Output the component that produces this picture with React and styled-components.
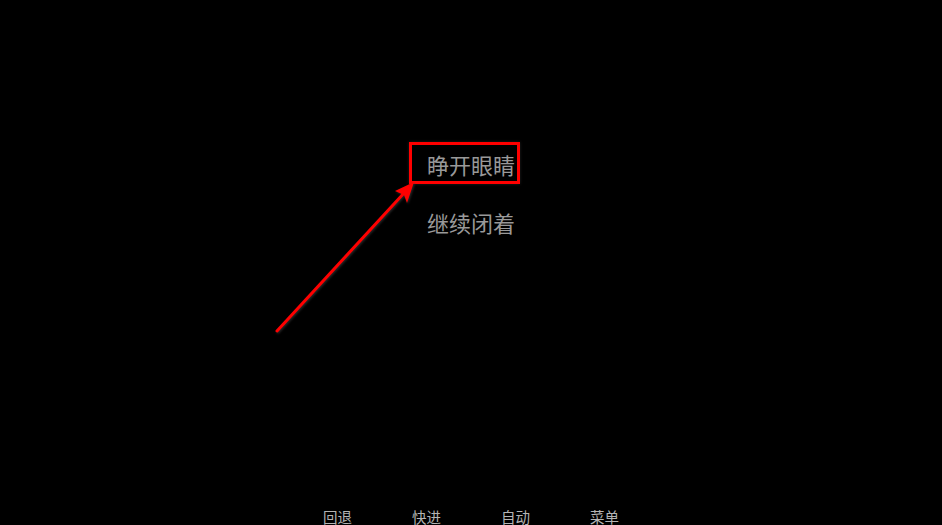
import React from 'react'
import styled, { createGlobalStyle } from 'styled-components'

const Global = createGlobalStyle`
    html, body {
        margin: 0;
        padding: 0;
        background: #000;
    }
`

const Screen = styled.div`
    position: relative;
    width: 942px;
    height: 525px;
    overflow: hidden;
    background: #000;
    display: flex;
    flex-direction: column;
    align-items: center;
    font-family: "Noto Sans CJK SC", "Noto Sans", sans-serif;
`

const Choices = styled.div`
    display: flex;
    flex-direction: column;
    align-items: center;
    gap: 18px;
    padding-top: 144px;
`

const Choice = styled.div`
    font-size: 22px;
    line-height: 40px;
    color: #999999;
    cursor: pointer;
`

const Bar = styled.div`
    margin-top: auto;
    height: 20px;
    display: flex;
    gap: 60px;
    align-items: flex-start;
`

const BarItem = styled.div`
    font-size: 14.5px;
    line-height: 24px;
    color: #b4b4b4;
    cursor: pointer;
`

const Highlight = styled.div`
    position: absolute;
    left: 409px;
    top: 142px;
    width: 105px;
    height: 36px;
    border: 3px solid #ff0000;
    box-shadow: 0 0 3px rgba(40, 40, 40, 0.8);
`

const Arrow = styled.svg`
    position: absolute;
    left: 0;
    top: 0;
    width: 942px;
    height: 525px;
    pointer-events: none;
    filter: drop-shadow(1px 1px 1px rgba(60, 60, 60, 0.7));
`

const choices = ['睁开眼睛', '继续闭着']
const menu = ['回退', '快进', '自动', '菜单']

export default function App() {
    return (
        <Screen>
            <Global />
            <Choices>
                {choices.map((c) => (
                    <Choice key={c}>{c}</Choice>
                ))}
            </Choices>
            <Bar>
                {menu.map((m) => (
                    <BarItem key={m}>{m}</BarItem>
                ))}
            </Bar>
            <Highlight />
            <Arrow viewBox="0 0 942 525">
                <line x1="277" y1="331" x2="405" y2="192" stroke="#ff0000" strokeWidth="3" strokeLinecap="round" />
                <polygon points="414,182 395,191 404,195 407,203" fill="#ff0000" />
            </Arrow>
        </Screen>
    )
}
